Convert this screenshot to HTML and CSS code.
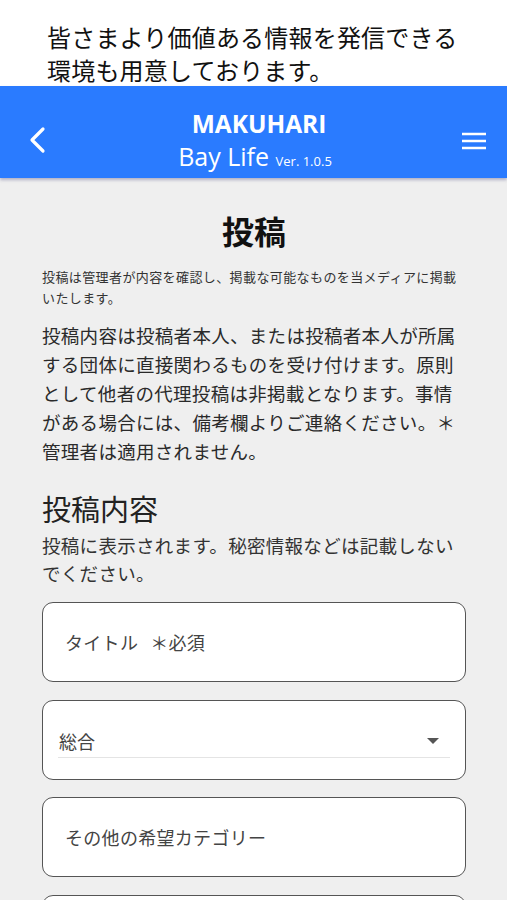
FILE: index.html
```html
<!DOCTYPE html>
<html lang="ja">
<head>
<meta charset="utf-8">
<link rel="stylesheet" href="styles.css">
</head>
<body>
<div class="intro">
  <p>皆さまより価値ある情報を発信できる<br>環境も用意しております。</p>
</div>
<header class="appbar">
  <div class="back">
    <svg width="22" height="30" viewBox="0 0 22 30"><path d="M16 3 L5 14 L16 25" fill="none" stroke="#fff" stroke-width="3.2" stroke-linecap="round" stroke-linejoin="round"/></svg>
  </div>
  <div class="brand">
    <div class="brand-top">MAKUHARI</div>
    <div class="brand-bottom">Bay Life <span class="ver">Ver. 1.0.5</span></div>
  </div>
  <div class="menu">
    <svg width="26" height="20" viewBox="0 0 26 20"><path d="M1 3 H25 M1 10 H25 M1 17 H25" stroke="#fff" stroke-width="2.6"/></svg>
  </div>
</header>
<main class="content">
  <h1 class="page-title">投稿</h1>
  <p class="note">投稿は管理者が内容を確認し、掲載な可能なものを当メディアに掲載いたします。</p>
  <p class="lead">投稿内容は投稿者本人、または投稿者本人が所属する団体に直接関わるものを受け付けます。原則として他者の代理投稿は非掲載となります。事情がある場合には、備考欄よりご連絡ください。＊管理者は適用されません。</p>
  <h2 class="section-title">投稿内容</h2>
  <p class="section-sub">投稿に表示されます。秘密情報などは記載しないでください。</p>
  <div class="fields">
    <div class="field"><span class="placeholder">タイトル<span class="req">＊必須</span></span></div>
    <div class="field select">
      <div class="select-row">
        <span class="select-value">総合</span>
        <span class="arrow"></span>
      </div>
    </div>
    <div class="field"><span class="placeholder">その他の希望カテゴリー</span></div>
    <div class="field"></div>
  </div>
</main>
</body>
</html>
```
FILE: styles.css
```css
* { box-sizing: border-box; }
html, body { margin: 0; padding: 0; }
body {
  width: 507px;
  height: 900px;
  overflow: hidden;
  background: #efefef;
  font-family: "Noto Sans CJK JP", "Noto Sans", sans-serif;
  color: #222;
}
.intro {
  background: #fff;
  height: 86px;
  padding: 20px 0 0 47px;
}
.intro p {
  margin: 0;
  font-size: 24px;
  line-height: 33px;
  color: #111;
  letter-spacing: 0.2px;
}
.appbar {
  height: 92px;
  background: #2a7bff;
  display: flex;
  align-items: center;
  justify-content: space-between;
  padding: 0 20px 0 27px;
  box-shadow: 0 2px 3px rgba(60, 60, 120, 0.35);
  position: relative;
}
.back { display: flex; align-items: center; margin-top: 17px; }
.menu { display: flex; align-items: center; margin-top: 17px; }
.brand {
  text-align: center;
  color: #fff;
  font-family: "Open Sans", "Noto Sans", sans-serif;
  padding-left: 8px;
  padding-top: 21px;
}
.brand-top {
  font-weight: 700;
  font-size: 24.5px;
  line-height: 33px;
}
.brand-bottom {
  font-size: 25px;
  line-height: 33px;
  padding-left: 0;
  margin-left: -8px;
}
.ver { font-size: 13px; }
.content {
  padding: 29px 41px 0 42px;
}
.page-title {
  margin: 0;
  text-align: center;
  font-size: 32px;
  line-height: 46px;
  font-weight: 700;
  color: #111;
}
.note {
  margin: 12.5px 0 0;
  font-size: 13px;
  letter-spacing: 0.4px;
  line-height: 21px;
  color: #333;
}
.lead {
  margin: 13px 0 0;
  font-size: 18.5px;
  letter-spacing: 0.3px;
  line-height: 29px;
  color: #2a2a2a;
}
.section-title {
  margin: 24.5px 0 0;
  font-size: 29px;
  line-height: 36px;
  font-weight: 400;
  color: #222;
}
.section-sub {
  margin: 5px 0 0;
  font-size: 18.5px;
  letter-spacing: 0.3px;
  line-height: 28px;
  color: #333;
}
.fields {
  margin-top: 15px;
  display: flex;
  flex-direction: column;
  gap: 17.5px;
}
.field {
  background: #fff;
  border: 1.5px solid #555;
  border-radius: 11px;
  height: 80px;
  display: flex;
  align-items: center;
  padding: 0 22px;
  flex-shrink: 0;
}
.placeholder {
  font-size: 18px;
  letter-spacing: 0.3px;
  color: #444;
}
.req { margin-left: 12px; }
.field.select {
  padding: 0 15px;
  align-items: stretch;
}
.select-row {
  flex: 1;
  display: flex;
  align-items: center;
  justify-content: space-between;
  margin-top: 24px;
  height: 33px;
  border-bottom: 1px solid #e4e4e4;
  padding: 0 0 0 1px;
}
.select-value { font-size: 18px; color: #444; }
.arrow {
  width: 0; height: 0;
  border-left: 6px solid transparent;
  border-right: 6px solid transparent;
  border-top: 6px solid #555;
  margin-right: 11px;
}
```
